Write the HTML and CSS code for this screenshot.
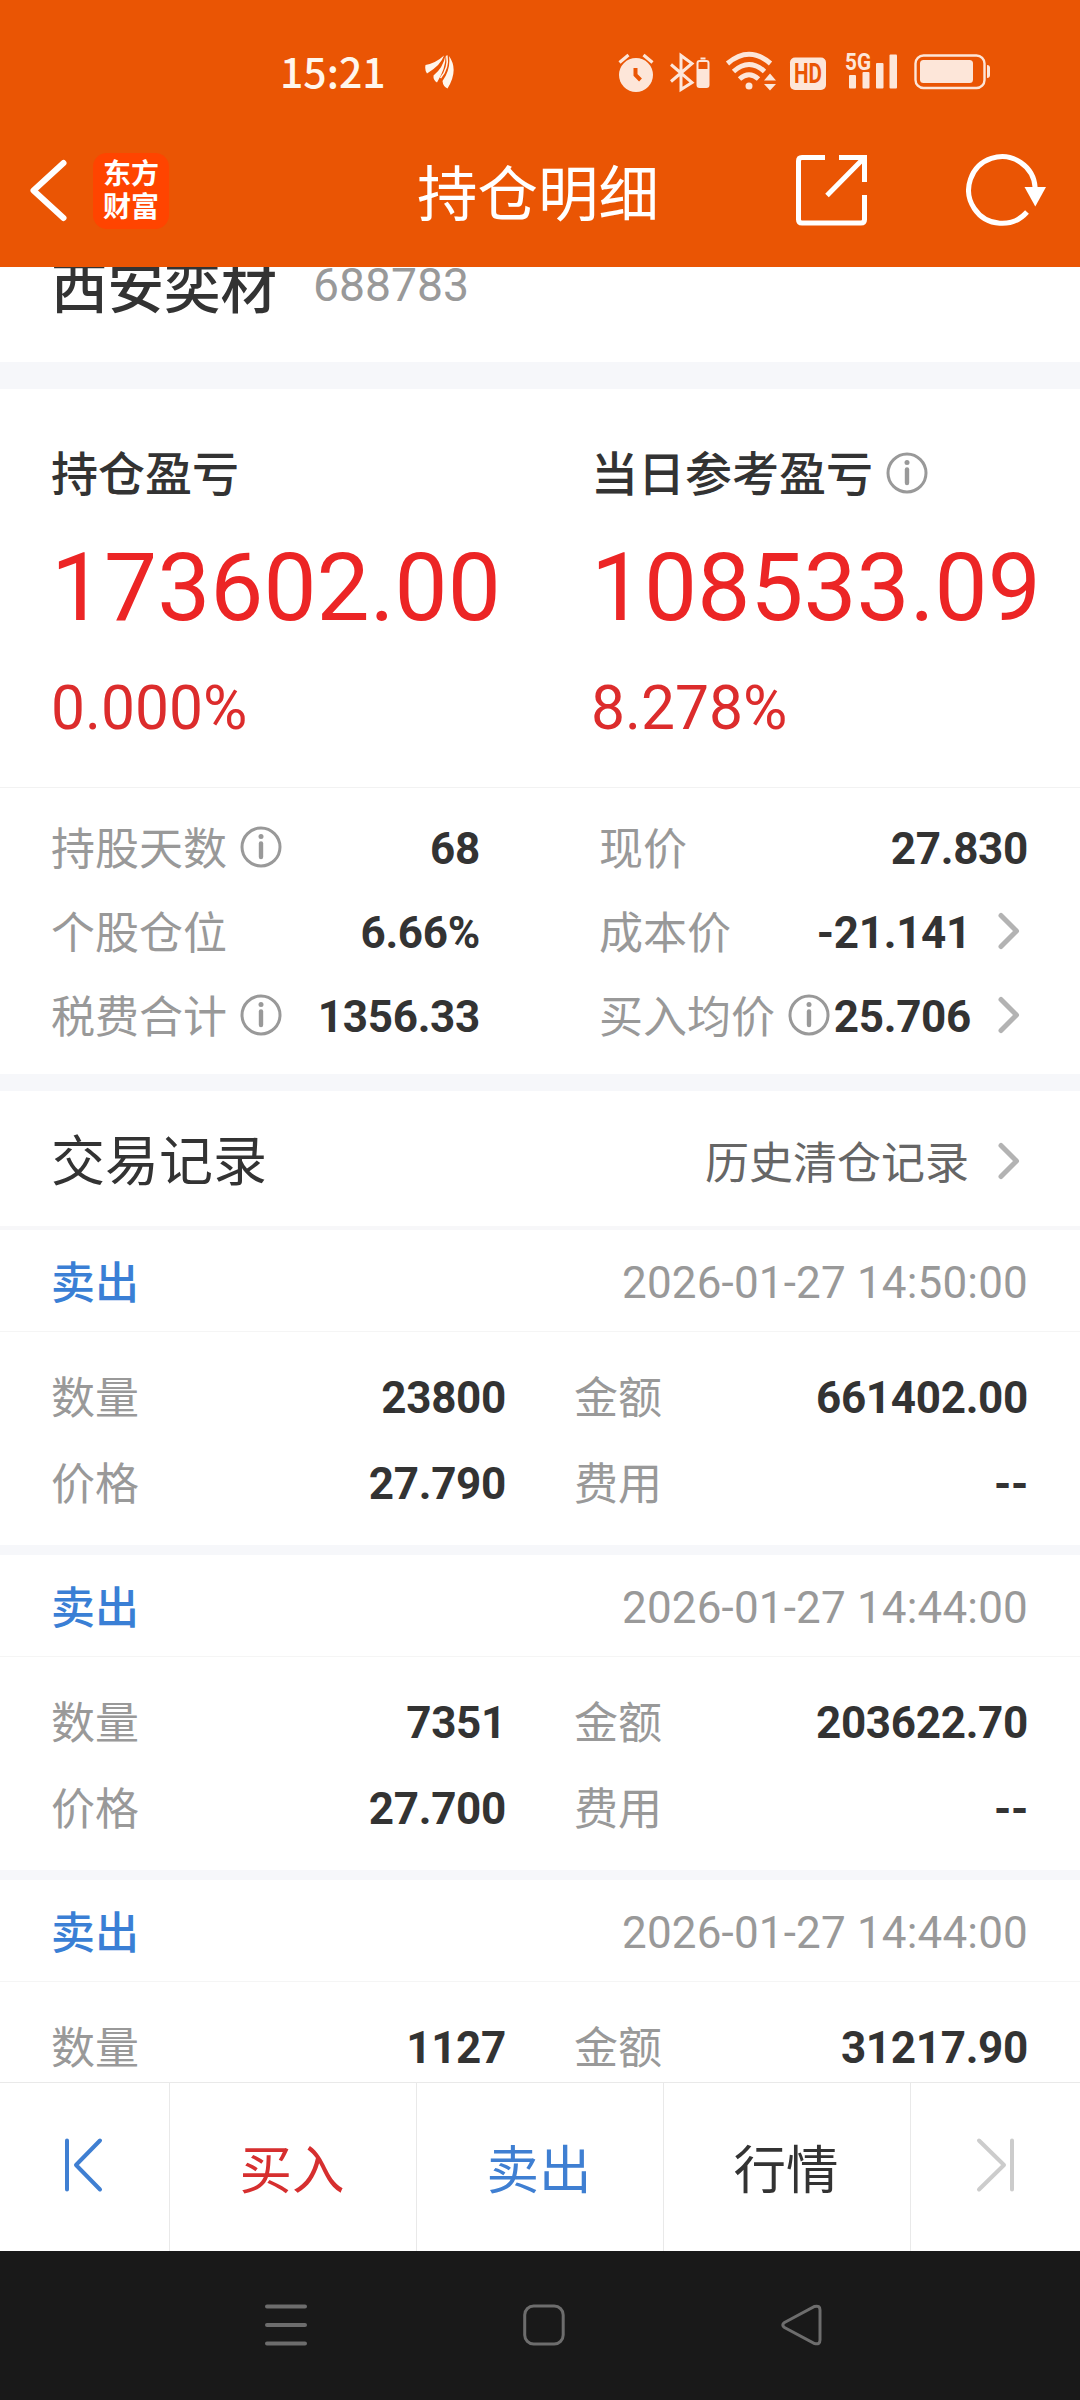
FILE: index.html
```html
<!DOCTYPE html>
<html lang="zh-CN">
<head>
<meta charset="utf-8">
<title>持仓明细</title>
<link rel="stylesheet" href="styles.css">
</head>
<body>
<svg class="defs" width="0" height="0">
  <symbol id="info" viewBox="0 0 42 42"><circle cx="21" cy="21" r="19" fill="none" stroke="#999" stroke-width="3"/><circle cx="21" cy="10.5" r="2.5" fill="#999"/><path d="M21 17.500V31" stroke="#999" stroke-width="4.400" stroke-linecap="round"/></symbol>
  <symbol id="chev" viewBox="0 0 22 38"><path d="M3 3.500L18.500 19L3 34.500" fill="none" stroke="#b3b3b3" stroke-width="5" stroke-linecap="round" stroke-linejoin="round"/></symbol>
</svg>
<div class="screen">
  <header class="top">
    <div class="status">
      <span class="time">15:21</span>
      <svg class="brand" width="30" height="34" viewBox="0 0 30 34" fill="#fff6ec"><path d="M.5 10Q11 8 19 .5Q16 10 2 18.500Q-.5 15 .5 10Z"/><path d="M20.500 .5Q21 13 12 27.500Q8 25 8.500 20.500Q18 13 20.500 .5Z"/><path d="M21.800 .5Q24 13 15.500 23" fill="none" stroke="#fff6ec" stroke-width="1.600"/><path d="M24 1Q34 15 22.500 33.500Q18 31.500 17.500 26Q26 14 24 1Z"/></svg>
      <svg class="sys" width="374" height="44" viewBox="617 50 374 44" fill="#fde6d9">
        <circle cx="636" cy="75" r="17"/><path d="M619.500 62.500l9-7.500M652.500 62.500l-9-7.500" stroke="#fde6d9" stroke-width="3.200"/><path d="M635.500 68v7l5 5" fill="none" stroke="#ea5504" stroke-width="4"/>
        <path d="M671 64.500L692 82.500L681 89.500V55.500L692 63.500L671 81.500" fill="none" stroke="#fde6d9" stroke-width="3"/>
        <rect x="697.500" y="61" width="11" height="26" rx="2" fill="none" stroke="#fde6d9" stroke-width="2"/><rect x="698" y="69" width="10" height="18"/><rect x="700.500" y="57.500" width="5" height="2"/>
        <g fill="none" stroke="#fde6d9" stroke-width="5"><path d="M727.500 63.500Q749 45 770.500 63.500"/><path d="M733.500 71.500Q749 57.500 764.500 71.500"/><path d="M739.500 79Q749 70.500 758.500 79"/></g><circle cx="749" cy="86" r="3.500"/><path d="M764 80.500h12l-6-7zM764 84h12l-6 6.500z"/>
        <rect x="790" y="57.500" width="36" height="32.500" rx="5"/><text class="hd" x="808" y="83" text-anchor="middle" textLength="28" lengthAdjust="spacingAndGlyphs">HD</text>
        <text class="net" x="845" y="69.500" textLength="26" lengthAdjust="spacingAndGlyphs">5G</text>
        <rect x="849" y="75" width="7" height="13.500" rx="1"/><rect x="862.500" y="72" width="7" height="16.500" rx="1"/><rect x="876" y="63" width="7.500" height="25.500" rx="1"/><rect x="889.500" y="54.500" width="7.500" height="34" rx="1"/>
        <rect x="915.500" y="55.500" width="69" height="32.500" rx="8" fill="none" stroke="#fde6d9" stroke-width="2.400"/><rect x="920" y="60" width="53" height="23" rx="3.500"/><path d="M987 65q3 0 3 3v7q0 3-3 3z"/>
      </svg>
    </div>
    <div class="titlebar">
      <svg class="back" width="40" height="66" viewBox="28 158 40 66"><path d="M63.500 163L33.500 190.500L63.500 218" fill="none" stroke="#fff" stroke-width="6" stroke-linecap="round" stroke-linejoin="round"/></svg>
      <div class="logo"><span>东方</span><span>财富</span></div>
      <h1>持仓明细</h1>
      <svg class="share" width="72" height="72" viewBox="796 155 72 72" fill="none" stroke="#fff" stroke-width="5"><path d="M825 157.500H802Q798.500 157.500 798.500 161V219.500Q798.500 223 802 223H861Q864.500 223 864.500 219.500V195"/><path d="M839 157.500H864.500V182M864 158L827 195.500"/></svg>
      <svg class="reload" width="82" height="74" viewBox="966 154 82 74"><path d="M1035.200 188A33.300 33.300 0 1 0 1027 212" fill="none" stroke="#fff" stroke-width="5"/><path d="M1024.500 187H1046L1035.300 206.500Z" fill="#fff"/></svg>
    </div>
  </header>

  <main class="page">
    <section class="stock"><span class="name">西安奕材</span><span class="code">688783</span></section>
    <section class="profit">
      <div class="pcol"><div class="phead">持仓盈亏</div><div class="big">173602.00</div><div class="pct">0.000%</div></div>
      <div class="pcol"><div class="phead">当日参考盈亏<svg class="i"><use href="#info"/></svg></div><div class="big">108533.09</div><div class="pct">8.278%</div></div>
    </section>
    <section class="facts">
      <div class="fcol">
        <div class="fact"><span class="lab">持股天数</span><svg class="i"><use href="#info"/></svg><b>68</b></div>
        <div class="fact"><span class="lab">个股仓位</span><b>6.66%</b></div>
        <div class="fact"><span class="lab">税费合计</span><svg class="i"><use href="#info"/></svg><b>1356.33</b></div>
      </div>
      <div class="fcol">
        <div class="fact"><span class="lab">现价</span><b>27.830</b></div>
        <div class="fact"><span class="lab">成本价</span><b>-21.141</b><svg class="c"><use href="#chev"/></svg></div>
        <div class="fact"><span class="lab">买入均价</span><svg class="i"><use href="#info"/></svg><b>25.706</b><svg class="c"><use href="#chev"/></svg></div>
      </div>
    </section>
    <section class="history"><h2>交易记录</h2><span class="more">历史清仓记录</span><svg class="c"><use href="#chev"/></svg></section>
    <article class="rec">
      <div class="rhead"><span class="sell">卖出</span><time>2026-01-27 14:50:00</time></div>
      <div class="rgrid"><div class="kv"><span class="lab">数量</span><b>23800</b></div><div class="kv"><span class="lab">金额</span><b>661402.00</b></div><div class="kv"><span class="lab">价格</span><b>27.790</b></div><div class="kv"><span class="lab">费用</span><b>--</b></div></div>
    </article>
    <article class="rec">
      <div class="rhead"><span class="sell">卖出</span><time>2026-01-27 14:44:00</time></div>
      <div class="rgrid"><div class="kv"><span class="lab">数量</span><b>7351</b></div><div class="kv"><span class="lab">金额</span><b>203622.70</b></div><div class="kv"><span class="lab">价格</span><b>27.700</b></div><div class="kv"><span class="lab">费用</span><b>--</b></div></div>
    </article>
    <article class="rec">
      <div class="rhead"><span class="sell">卖出</span><time>2026-01-27 14:44:00</time></div>
      <div class="rgrid"><div class="kv"><span class="lab">数量</span><b>1127</b></div><div class="kv"><span class="lab">金额</span><b>31217.90</b></div></div>
    </article>
  </main>

  <nav class="actions">
    <div class="edge"><svg width="40" height="56" viewBox="0 0 40 56" fill="none" stroke="#3f7fd2" stroke-width="4" stroke-linecap="round" stroke-linejoin="round"><path d="M3 3.500V52.500M36 3.500L12 28L36 52.500"/></svg></div>
    <div class="buy">买入</div>
    <div class="sellbtn">卖出</div>
    <div>行情</div>
    <div class="edge"><svg width="40" height="56" viewBox="0 0 40 56" fill="none" stroke="#ccc" stroke-width="4" stroke-linecap="round" stroke-linejoin="round"><path d="M37 3.500V52.500M4 3.500L29 28L4 52.500"/></svg></div>
  </nav>
  <footer class="sysnav">
    <svg width="42" height="42" viewBox="0 0 42 42" stroke="#6d6d6d" stroke-width="4" stroke-linecap="round"><path d="M2 2.500H40M2 21H40M2 39.500H40"/></svg>
    <svg width="42" height="42" viewBox="0 0 42 42" fill="none" stroke="#6d6d6d" stroke-width="3"><rect x="1.700" y="2" width="38.500" height="38" rx="9"/></svg>
    <svg width="42" height="42" viewBox="0 0 42 42" fill="none" stroke="#6d6d6d" stroke-width="3"><path d="M3.500 18.500L33.500 2.500Q39 1 39 6V36Q39 41 33.500 39.500L3.500 23.500Q0 21 3.500 18.500Z"/></svg>
  </footer>
</div>
</body>
</html>
```

FILE: styles.css
```css
* { box-sizing: border-box; }
body { margin: 0; background: #fff; }
.defs { display: block; position: absolute; }
.screen { width: 1080px; height: 2400px; display: flex; flex-direction: column; overflow: hidden; font-family: Roboto, "Noto Sans CJK SC", sans-serif; font-size: 44px; line-height: 60px; color: #333; }
svg { display: block; flex: none; }

.top { flex: none; height: 267px; background: #ea5504; color: #fff; }
.status { height: 144px; padding-left: 280px; display: flex; align-items: center; }
.time { width: 145px; margin-top: -4px; font-family: "Noto Sans CJK SC", sans-serif; font-weight: 500; font-size: 41px; line-height: 44px; color: #fff6ec; }
.sys { margin-left: 162px; overflow: visible; }
.hd { font: 700 27px Roboto, sans-serif; fill: #ea5504; }
.net { font: 700 24px Roboto, sans-serif; }
.titlebar { height: 93px; padding-left: 28px; display: flex; align-items: center; }
.logo { width: 76px; height: 76px; margin-left: 25px; padding-top: 5px; border-radius: 14px; background: #ff4400; font-size: 28px; font-weight: 700; line-height: 33px; text-align: center; }
.logo span { display: block; }
h1 { margin: 11px 0 0 248px; width: 241px; font-size: 60.5px; font-weight: 400; line-height: 80px; white-space: nowrap; }
.share { margin-left: 138px; }
.reload { margin-left: 98px; }

.page { flex: 1; min-height: 0; overflow: hidden; }
.stock { height: 122px; padding: 0 51px; border-bottom: 27px solid #f6f7fa; display: flex; align-items: flex-start; line-height: 36px; white-space: nowrap; }
.name { margin-top: 4px; font-size: 56.5px; font-weight: 500; }
.code { margin-left: 36px; font-size: 46.3px; }
.code, .lab, time { color: #999; }
.profit { height: 399px; padding-left: 51px; display: flex; border-bottom: 1px solid #f2f2f2; }
.pcol { flex: none; width: 540px; padding-top: 56px; }
.phead { display: flex; align-items: center; height: 60px; font-size: 47px; font-weight: 500; }
.i { width: 42px; height: 42px; margin-left: 13px; position: relative; top: -2px; }
.big { margin-top: 28px; font-size: 94.5px; line-height: 110px; color: #ec2525; }
.pct { margin-top: 26px; font-size: 60.5px; line-height: 80px; color: #dc2c2c; }
.facts { height: 303px; padding: 19px 52px 0 51px; border-bottom: 17px solid #f6f7fa; display: flex; justify-content: space-between; }
.fcol { width: 429px; }
.fact { height: 84px; display: flex; align-items: center; }
.lab { margin-top: 2px; white-space: nowrap; }
b { margin-left: auto; font-weight: 700; letter-spacing: -.3px; }
.c { width: 22px; height: 38px; margin: 0 8px 0 27px; position: relative; top: -2px; }
.history { height: 139px; padding: 0 52px 0 51px; border-bottom: 4px solid #f7f7f9; display: flex; align-items: center; }
h2 { margin: 9px auto 0 0; font-size: 54px; font-weight: 400; line-height: 60px; }
.more { margin-top: 11px; color: #666; }
.history .c { top: 2px; margin-left: 29px; }
.rec { height: 325px; border-bottom: 10px solid #f6f7fa; }
.rhead { height: 102px; padding: 4px 52px 0 51px; border-bottom: 1px solid #f5f5f5; display: flex; align-items: center; justify-content: space-between; }
.sell { margin-top: 3px; font-weight: 500; color: #3a7fd5; }
time { letter-spacing: .17px; }
.rgrid { padding: 23px 52px 0 51px; display: grid; grid-template-columns: 455px 454px; column-gap: 68px; grid-auto-rows: 86px; }
.kv { display: flex; align-items: center; }

.actions { flex: none; height: 169px; border-top: 1px solid #e9e9e9; display: grid; grid-template-columns: 170px 247px 247px 247px 169px; font-size: 52.5px; background: #fff; }
.actions div { display: flex; align-items: center; justify-content: center; padding: 7px 2px 0 0; border-right: 1px solid #e9e9e9; }
.actions .edge { padding: 0 2px 4px 0; }
.actions div:last-child { border-right: 0; }
.actions .buy { color: #d62f2f; }
.actions .sellbtn { color: #3f7fd2; }
.sysnav { flex: none; height: 149px; padding: 0 257px 1px 265px; background: #191919; display: flex; align-items: center; justify-content: space-between; }
```
